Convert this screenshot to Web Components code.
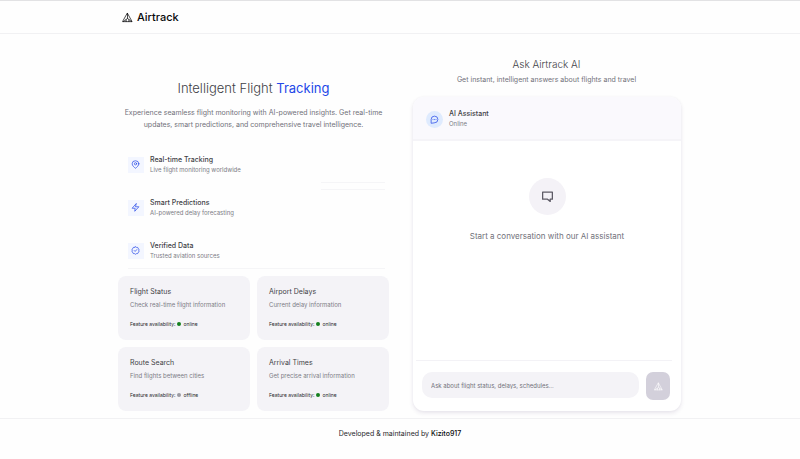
<!DOCTYPE html>
<html lang="en">
<head>
<meta charset="utf-8">
<meta name="viewport" content="width=device-width, initial-scale=1">
<title>Airtrack</title>
<style>
  html { background: #fefefe; }
  body { margin: 0; font-family: Inter, "Liberation Sans", sans-serif; color: #3f3f46; }
</style>
</head>
<body>
<air-page>
  <air-header slot="header"></air-header>
  <air-hero slot="left">
    <air-feature icon="pin" heading="Real-time Tracking" lines="end">Live flight monitoring worldwide</air-feature>
    <air-feature icon="bolt" heading="Smart Predictions" lines="start">AI-powered delay forecasting</air-feature>
    <air-feature icon="check" heading="Verified Data" lines="full">Trusted aviation sources</air-feature>
    <air-card slot="cards" heading="Flight Status" status="online">Check real-time flight information</air-card>
    <air-card slot="cards" heading="Airport Delays" status="online">Current delay information</air-card>
    <air-card slot="cards" heading="Route Search" status="offline">Find flights between cities</air-card>
    <air-card slot="cards" heading="Arrival Times" status="online">Get precise arrival information</air-card>
  </air-hero>
  <air-chat slot="right"></air-chat>
  <air-footer slot="footer"></air-footer>
</air-page>

<script>
const icons = {
  logo: '<path d="M12 3 22 21 H2 Z M12 3 V14 M3 21 12 14 21 21 M9 17 V21 M15 17 V21"/>',
  pin: '<path d="M21 10c0 5-6 10-9 12-3-2-9-7-9-12a9 8 0 0 1 18 0Z"/><circle cx="12" cy="10" r="3"/>',
  bolt: '<path d="M13.500 2 3 14h8l-1 8L21 10h-8Z"/>',
  check: '<path d="M12 2l2.600 1.700 3.200.1 1.200 3 2.500 2-.7 3.200.7 3.200-2.500 2-1.200 3-3.200.1L12 22l-2.600-1.700-3.200-.1-1.200-3-2.500-2 .7-3.200-.7-3.200 2.500-2 1.200-3 3.200-.1Z"/><path d="m8.500 12 2.500 2.500 4.500-5"/>',
  chat: '<path d="M3 21v-9a9 9 0 1 1 9 9Z"/><path d="M8 12h.1M12 12h.1M16 12h.1"/>',
  bubble: '<path d="M3 4h18v13h-4v4l-5-4H3Z"/>'
};
const icon = (name, size, stroke = 2) =>
  `<svg width="${size}" height="${size}" viewBox="0 0 24 24" fill="none" stroke="currentColor" stroke-width="${stroke}" stroke-linecap="round" stroke-linejoin="round" aria-hidden="true">${icons[name]}</svg>`;

class AirElement extends HTMLElement {
  connectedCallback() {
    if (this.shadowRoot) return;
    this.attachShadow({ mode: 'open' }).innerHTML =
      `<style>*{box-sizing:border-box;margin:0}svg{display:block;flex:none}${this.css()}</style>${this.html()}`;
  }
}

customElements.define('air-page', class extends AirElement {
  css() { return `
    :host { display: flex; flex-direction: column; min-height: 100vh; }
    main { flex: 1; display: grid; grid-template-columns: 1fr 1fr; gap: 22px;
      width: calc(100% - 32px); max-width: 564px; margin: 0 auto; padding: 22px 0 7px; }
    @media (max-width: 520px) { main { grid-template-columns: 1fr; } }`; }
  html() { return `<slot name="header"></slot><main><slot name="left"></slot><slot name="right"></slot></main><slot name="footer"></slot>`; }
});

customElements.define('air-header', class extends AirElement {
  css() { return `
    :host { display: block; border-top: 1px solid #e2e2e4; border-bottom: 1px solid #f1f1f3; }
    header { display: flex; width: calc(100% - 32px); max-width: 564px; margin: 0 auto; padding: 8px 4px; }
    a { display: flex; align-items: center; gap: 4px; color: #09090b; text-decoration: none;
      font-size: 11px; line-height: 16px; font-weight: 500; }`; }
  html() { return `<header><a href="#">${icon('logo', 11, 1.6)}<span>Airtrack</span></a></header>`; }
});

customElements.define('air-hero', class extends AirElement {
  css() { return `
    :host { display: flex; flex-direction: column; padding-top: 22px; }
    h1 { font-size: 13px; line-height: 20px; font-weight: 300; text-align: center; color: #3f3f46; }
    h1 span { font-weight: 400; color: #2348e8; }
    p { margin-top: 9px; font-size: 7px; line-height: 12px; text-align: center; color: #71717a; }
    .features { display: flex; flex-direction: column; gap: 6px; margin: 15px 4px 7px 10px; }
    .cards { display: grid; grid-template-columns: 1fr 1fr; gap: 7px; margin-top: auto; }`; }
  html() { return `<h1>Intelligent Flight <span>Tracking</span></h1>
    <p>Experience seamless flight monitoring with AI-powered insights. Get real-time updates, smart predictions, and comprehensive travel intelligence.</p>
    <div class="features"><slot></slot></div><div class="cards"><slot name="cards"></slot></div>`; }
});

customElements.define('air-feature', class extends AirElement {
  css() { return `
    :host { display: flex; align-items: center; gap: 6px; height: 37px; --line: #f5f5f7; }
    :host([lines="end"]) { background: linear-gradient(var(--line), var(--line)) right bottom / 25% 1px no-repeat; }
    :host([lines="start"]) { background: linear-gradient(var(--line), var(--line)) right top / 25% 1px no-repeat; }
    :host([lines="full"]) { background: linear-gradient(var(--line), var(--line)) bottom / 100% 1px no-repeat; }
    .tile { width: 16px; height: 16px; display: grid; place-items: center; padding-right: 2px; background: #f3f6ff; color: #2d4fe8; }
    h3 { font-size: 7px; line-height: 10px; font-weight: 500; color: #3f3f46; }
    .d { font-size: 6px; line-height: 10px; color: #7c7c85; }`; }
  html() { return `<div class="tile">${icon(this.getAttribute('icon'), 9)}</div>
    <div><h3>${this.getAttribute('heading')}</h3><div class="d"><slot></slot></div></div>`; }
});

customElements.define('air-card', class extends AirElement {
  css() { return `
    :host { display: block; padding: 10px 12px; border-radius: 8px; background: #f4f3f7; }
    h3 { font-size: 7px; line-height: 12px; font-weight: 400; color: #3f3f46; }
    .d { margin-top: 1px; font-size: 6px; line-height: 12px; color: #7c7c85; }
    .s { display: flex; align-items: center; gap: 2px; margin-top: 7px; font-size: 5px; line-height: 12px; color: #27272a; white-space: nowrap; }
    i { width: 4px; height: 4px; border-radius: 50%; background: #15801f; }
    i.offline { background: #9a9aa2; }`; }
  html() { const s = this.getAttribute('status'); return `<h3>${this.getAttribute('heading')}</h3>
    <div class="d"><slot></slot></div><div class="s"><span>Feature availability:</span><i class="${s}"></i><span>${s}</span></div>`; }
});

customElements.define('air-chat', class extends AirElement {
  css() { return `
    :host { display: flex; flex-direction: column; }
    h2 { font-size: 10px; line-height: 16px; font-weight: 300; text-align: center; color: #3f3f46; }
    .sub { margin-top: 2px; font-size: 7px; line-height: 12px; text-align: center; color: #71717a; }
    .panel { flex: 1; display: flex; flex-direction: column; margin: 11px 1px 0 2px; border-radius: 11px; background: #fff;
      box-shadow: 0 2px 4px rgba(70,50,110,.12), 0 0 3px rgba(70,50,110,.03); overflow: hidden; }
    .head { display: flex; align-items: center; gap: 6px; padding: 12px 13px 10px; height: 44px; background: #faf9fd; border-bottom: 2px solid #f5f4f8; }
    .avatar { width: 17px; height: 17px; border-radius: 50%; display: grid; place-items: center; background: #dfebfe; color: #2d4fe8; }
    h3 { font-size: 7px; line-height: 10px; font-weight: 500; color: #3f3f46; }
    .on { font-size: 6px; line-height: 10px; color: #7c7c85; }
    .body { flex: 1; display: flex; flex-direction: column; align-items: center; padding: 37px 12px; gap: 15px; }
    .disc { width: 37px; height: 37px; border-radius: 50%; display: grid; place-items: center; background: #f4f2f7; color: #5d5b66; }
    .body p { font-size: 8px; line-height: 12px; color: #71717a; }
    form { display: flex; gap: 7px; align-items: flex-start; margin: 0 9px 0 3px; padding: 11px 2px 11px 6px; border-top: 1px solid #f3f2f6; }
    input { flex: 1; min-width: 0; height: 26px; padding: 0 9px; border: 0; border-radius: 10px; background: #f4f3f7; font: 6px/12px Inter, "Liberation Sans", sans-serif; color: #3f3f46; outline: 0; }
    input::placeholder { color: #71717a; opacity: 1; }
    button { width: 24px; height: 28px; padding: 0; border: 0; border-radius: 7px; display: grid; place-items: center; background: #d3d0db; color: #fff; }`; }
  html() { return `<h2>Ask Airtrack AI</h2><p class="sub">Get instant, intelligent answers about flights and travel</p>
    <div class="panel"><div class="head"><div class="avatar">${icon('chat', 9)}</div><div><h3>AI Assistant</h3><div class="on">Online</div></div></div>
    <div class="body"><div class="disc">${icon('bubble', 13, 2.4)}</div><p>Start a conversation with our AI assistant</p></div>
    <form><input type="text" aria-label="Message" placeholder="Ask about flight status, delays, schedules..."><button type="button" aria-label="Send">${icon('logo', 9, 1.6)}</button></form></div>`; }
});

customElements.define('air-footer', class extends AirElement {
  css() { return `
    :host { display: block; border-top: 1px solid #f1f1f3; padding: 9px 16px 19px; text-align: center; font-size: 7px; line-height: 12px; color: #27272a; }
    a { color: #09090b; font-weight: 500; text-decoration: none; }`; }
  html() { return `<footer>Developed &amp; maintained by <a href="#">Kizito917</a></footer>`; }
});
</script>
</body>
</html>
